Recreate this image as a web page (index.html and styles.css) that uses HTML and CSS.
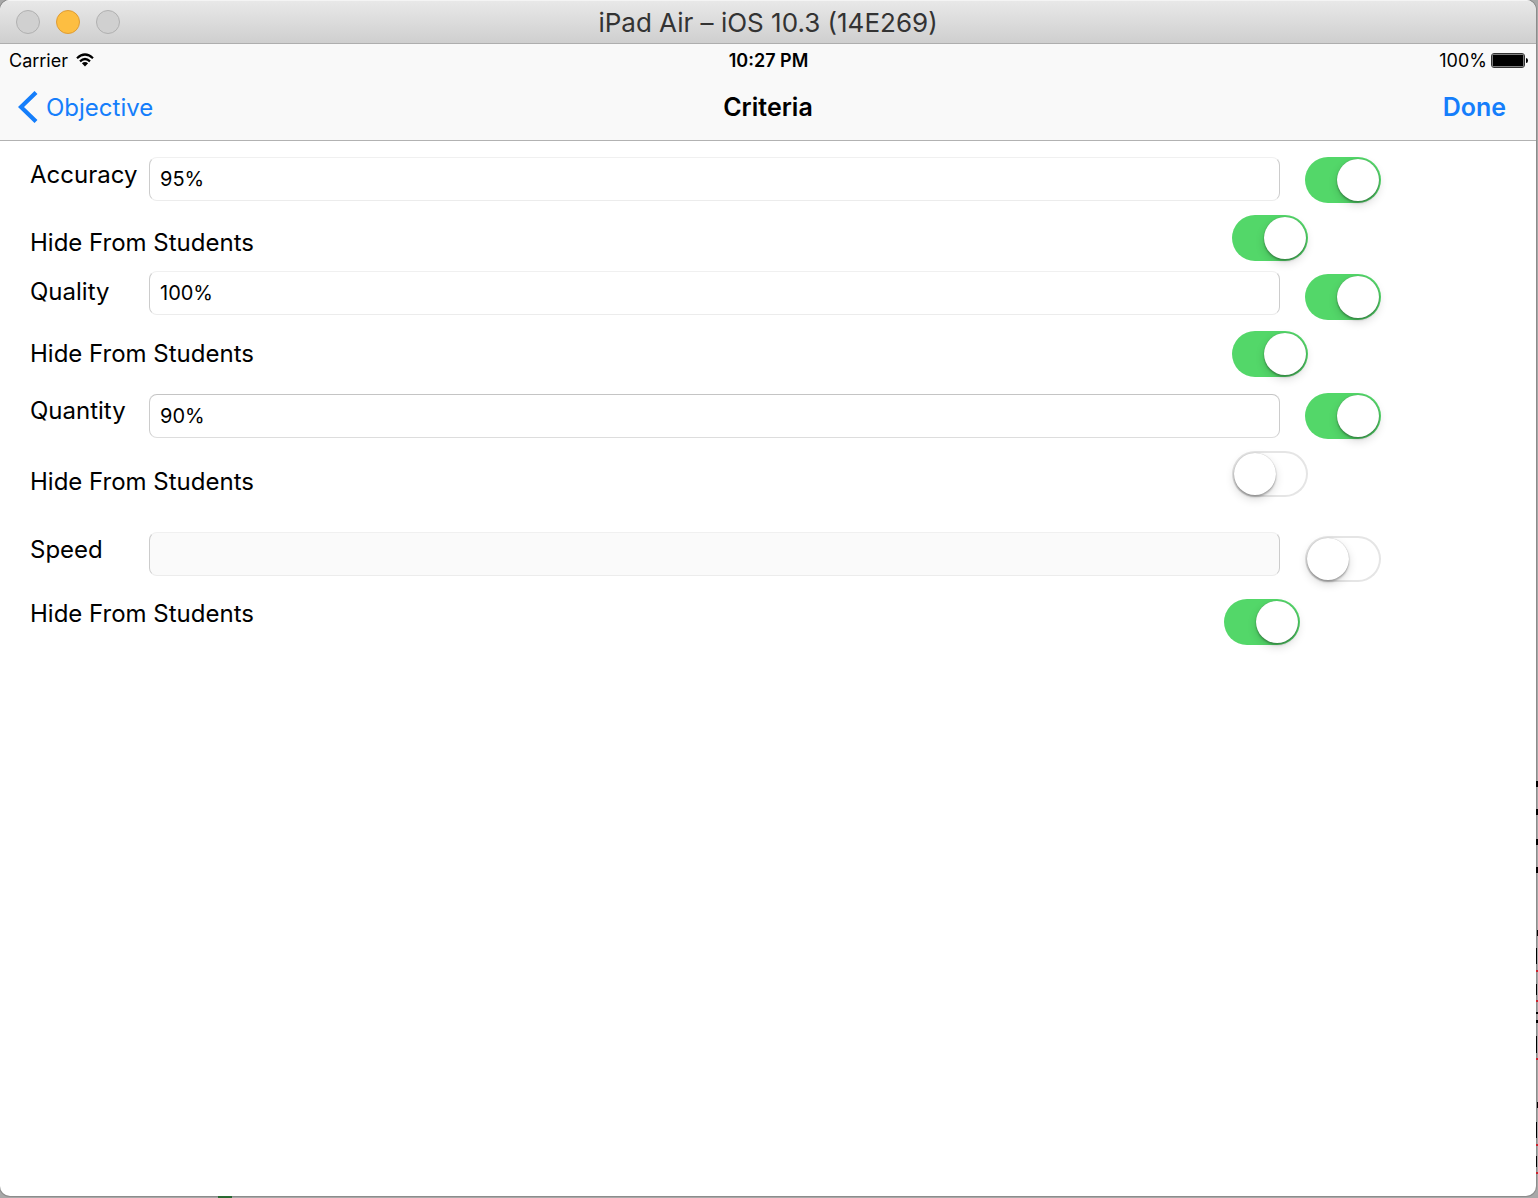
FILE: index.html
```html
<!DOCTYPE html>
<html lang="en">
<head>
<meta charset="utf-8">
<title>Criteria</title>
<link rel="stylesheet" href="styles.css">
</head>
<body>
<div class="window">
  <header class="titlebar">
    <div class="lights">
      <button class="light" type="button" aria-label="Close"></button>
      <button class="light light-minimize" type="button" aria-label="Minimize"></button>
      <button class="light" type="button" aria-label="Zoom"></button>
    </div>
    <div class="window-title">iPad Air – iOS 10.3 (14E269)</div>
  </header>

  <div class="bars">
    <div class="statusbar">
      <div class="carrier">
        <span>Carrier</span>
        <svg width="18" height="14" viewBox="0 0 18 14" aria-hidden="true">
          <path d="M1 5.2Q9-2.2 17 5.2M4 8.4Q9 3.6 14 8.4" fill="none" stroke="#000" stroke-width="2.2"/>
          <path d="M5.9 10.2Q9 7.6 12.1 10.2L9 13.5Z"/>
        </svg>
      </div>
      <div class="time">10:27 PM</div>
      <div class="power">
        <span>100%</span>
        <svg width="37" height="15" viewBox="0 0 37 15" aria-hidden="true">
          <rect x=".5" y=".5" width="33" height="14" rx="2.5" fill="#fff" stroke="#333"/>
          <rect x="1.5" y="1.5" width="31" height="12" rx="1"/>
          <path d="M35 5Q37 5 37 7.5Q37 10 35 10Z"/>
        </svg>
      </div>
    </div>
    <nav class="navbar">
      <a class="back" href="#">
        <svg width="20" height="32" viewBox="0 0 20 32" aria-hidden="true">
          <path d="M18 1.5L3 16L18 30.5" fill="none" stroke="#157efb" stroke-width="4.2"/>
        </svg>
        Objective
      </a>
      <h1 class="nav-title">Criteria</h1>
      <button class="done" type="button">Done</button>
    </nav>
  </div>

  <form class="criteria">
    <div class="row">
      <label class="name" for="accuracy">Accuracy</label>
      <input class="field" id="accuracy" type="text" value="95%">
      <input class="switch" type="checkbox" aria-label="Use accuracy" checked>
    </div>
    <div class="row row-hide">
      <label class="name at-end" for="hide-accuracy">Hide From Students</label>
      <input class="switch" id="hide-accuracy" type="checkbox" checked>
    </div>
    <div class="row row-tall row-quality">
      <label class="name at-baseline" for="quality">Quality</label>
      <input class="field at-baseline" id="quality" type="text" value="100%">
      <input class="switch at-end" type="checkbox" aria-label="Use quality" checked>
    </div>
    <div class="row row-hide">
      <label class="name at-center" for="hide-quality">Hide From Students</label>
      <input class="switch" id="hide-quality" type="checkbox" checked>
    </div>
    <div class="row row-quantity">
      <label class="name" for="quantity">Quantity</label>
      <input class="field field-strong at-center" id="quantity" type="text" value="90%">
      <input class="switch" type="checkbox" aria-label="Use quantity" checked>
    </div>
    <div class="row row-hide row-tall">
      <label class="name at-end" for="hide-quantity">Hide From Students</label>
      <input class="switch" id="hide-quantity" type="checkbox">
    </div>
    <div class="row row-speed">
      <label class="name" for="speed">Speed</label>
      <input class="field" id="speed" type="text" disabled>
      <input class="switch at-end" type="checkbox" aria-label="Use speed">
    </div>
    <div class="row row-hide row-tall row-last">
      <label class="name" for="hide-speed">Hide From Students</label>
      <input class="switch at-end" id="hide-speed" type="checkbox" checked>
    </div>
  </form>
</div>
<svg class="behind-right" width="2" height="428" viewBox="0 0 2 428" aria-hidden="true">
  <path d="M0 11h2v6H0zM0 39h2v6H0zM0 69h2v6H0zM0 97h2v6H0zM1 160h1v6H1zM0 178h1v16H0zM0 214h1v11H0zM0 242h2v2H0zM0 250h2v3H0zM0 266h1v17H0zM1 332h1v6H1zM0 352h1v16H0zM0 386h1v11H0z"/>
  <path fill="#c8232c" d="M0 200h2v2H0zM0 230h2v2H0zM0 288h2v2H0zM0 374h2v2H0zM0 402h2v2H0z"/>
</svg>
<div class="behind-bottom"></div>
</body>
</html>
```
FILE: styles.css
```css
* { box-sizing: border-box; }

body {
  margin: 0;
  min-height: 100vh;
  padding: 0 2px 2px 0;
  display: flex;
  position: relative;
  background: #a8a8a8;
  color: #000;
  font-family: Inter, "Liberation Sans", sans-serif;
  font-size: 24px;
}

button { padding: 0; border: 0; background: none; font: inherit; }

.window {
  flex: 1;
  background: #fff;
  border-radius: 10px;
  overflow: hidden;
  box-shadow: 0 0 0 1px #8c8c8c;
}

.titlebar {
  height: 44px;
  padding: 0 16px;
  display: grid;
  grid-template-columns: 1fr auto 1fr;
  align-items: center;
  background: linear-gradient(#e8e8e8, #cfcfcf);
  border-top: 1px solid #f4f4f4;
  border-bottom: 1px solid #aeaeae;
}

.lights { display: flex; gap: 16px; }

.light {
  width: 24px;
  height: 24px;
  border: 1px solid #b0b0b0;
  border-radius: 50%;
  background: #d0d0d0;
}

.light-minimize { background: #fdbe41; border-color: #de9c35; }

.window-title { font-size: 26px; color: #333; }

.bars {
  background: #f9f9f9;
  border-bottom: 1px solid #b2b2b2;
}

.statusbar {
  height: 32px;
  padding: 0 8px 0 9px;
  display: grid;
  grid-template-columns: 1fr auto 1fr;
  align-items: center;
  font-size: 18px;
}

.carrier { display: flex; align-items: center; gap: 8px; }
.time { font-weight: 600; }
.power { display: flex; align-items: center; justify-content: flex-end; gap: 4px; }

.navbar {
  height: 64px;
  padding: 0 18px 2px;
  display: grid;
  grid-template-columns: 1fr auto 1fr;
  align-items: center;
}

.back {
  display: flex;
  align-items: center;
  gap: 8px;
  color: #157efb;
  text-decoration: none;
}

.nav-title { margin: 0; font-size: 25px; font-weight: 600; }

.done {
  justify-self: end;
  margin-right: 12px;
  color: #157efb;
  font-size: 25px;
  font-weight: 600;
}

.criteria { padding: 16px 155px 16px 30px; }

.row {
  min-height: 46px;
  margin-bottom: 12px;
  display: flex;
  align-items: flex-start;
}

.row-hide { padding-right: 73px; justify-content: space-between; margin-bottom: 10px; }
.row-tall { min-height: 49px; }
.row-quality { margin-bottom: 11px; }
.row-quantity { margin-top: 16px; }
.row-speed { margin-top: 32px; margin-bottom: 14px; min-height: 50px; }
.row-last { padding-right: 81px; }

.name { flex: none; line-height: 36px; }
.row:not(.row-hide) .name { width: 119px; }
.at-baseline { align-self: baseline; }
.at-center { align-self: center; }
.at-end { align-self: flex-end; }

.field {
  flex: 1;
  min-width: 0;
  height: 44px;
  margin-right: 25px;
  padding: 0 10px;
  border: 1px solid #ccc;
  border-top-color: #f0f0f0;
  border-bottom-color: #ececec;
  border-radius: 8px;
  background: #fff;
  color: #000;
  font: inherit;
  font-size: 20px;
}

.field-strong { border-top-color: #c4c4c4; border-bottom-color: #ddd; }
.field:disabled { background: #fafafa; }

.switch {
  appearance: none;
  flex: none;
  width: 76px;
  height: 46px;
  margin: 0;
  padding: 2px;
  display: flex;
  border: 0;
  border-radius: 23px;
  background: #fff;
  box-shadow: inset 0 0 0 2px #e5e5e5;
}

.switch::before {
  content: "";
  width: 42px;
  height: 42px;
  border-radius: 50%;
  background: #fff;
  box-shadow: 0 2px 2px rgba(0, 0, 0, 0.25), 0 4px 10px rgba(0, 0, 0, 0.15), 0 0 1px rgba(0, 0, 0, 0.3);
}

.switch:checked {
  justify-content: flex-end;
  background: #53d769;
  box-shadow: none;
}

.behind-right { position: absolute; right: 0; bottom: 0; }

.behind-bottom {
  position: absolute;
  left: 218px;
  bottom: 0;
  width: 14px;
  height: 2px;
  background: #2a6a33;
}
```
